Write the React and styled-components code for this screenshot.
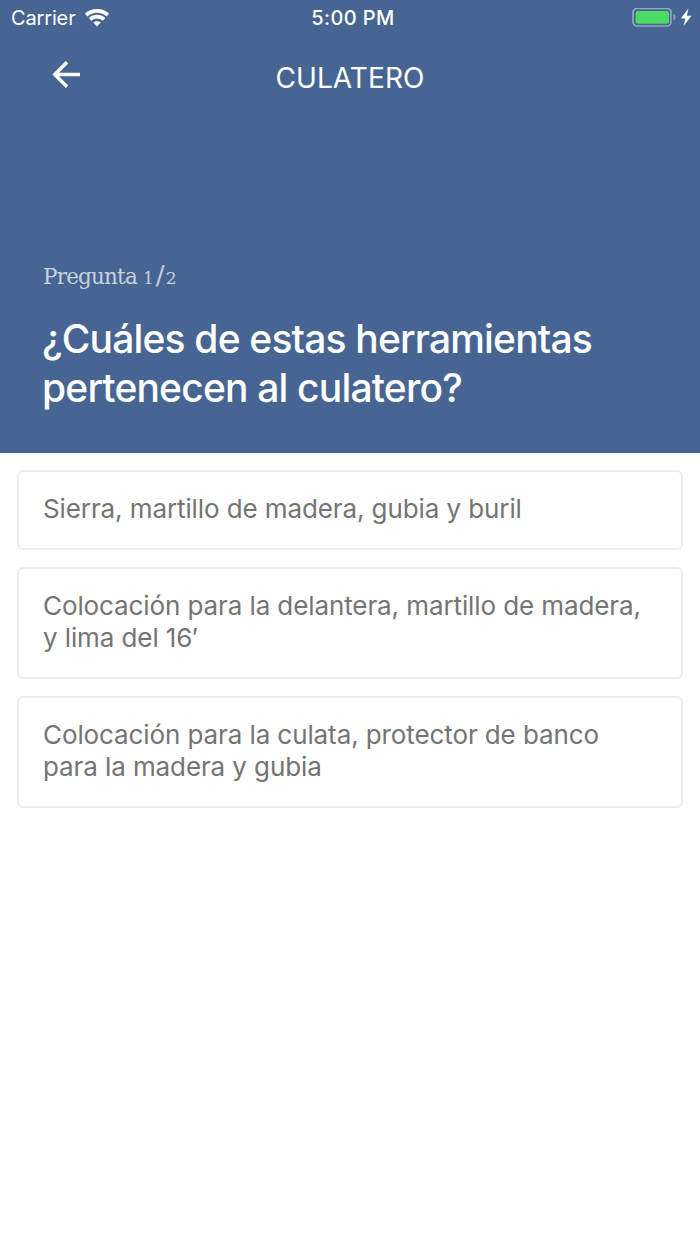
import { useState } from 'react';
import styled, { createGlobalStyle } from 'styled-components';

const GlobalStyle = createGlobalStyle`
* {
  box-sizing: border-box;
}
body {
  margin: 0;
  background: #fff;
  font-family: Inter, 'Liberation Sans', sans-serif;
}
`

const Screen = styled.div`
width: 100%;
min-height: 1244px;
background: #fff;
`

const Header = styled.header`
display: flex;
flex-direction: column;
height: 453px;
background: #476592;
color: #fff;
`

const StatusBar = styled.div`
display: grid;
grid-template-columns: 1fr auto 1fr;
align-items: center;
height: 36px;
padding: 0 8px 0 11px;
`

const Carrier = styled.div`
display: flex;
align-items: center;
gap: 9px;
font-size: 20px;
letter-spacing: -0.15px;
`

const Clock = styled.div`
padding-left: 3px;
font-size: 20px;
font-weight: 500;
letter-spacing: 0.4px;
`

const Battery = styled.div`
display: flex;
justify-content: flex-end;
`

const NavBar = styled.div`
display: grid;
grid-template-columns: 100px 1fr 100px;
align-items: center;
height: 84px;
`

const BackButton = styled.button`
display: flex;
margin: -7px 0 0 50px;
padding: 0;
border: 0;
background: none;
color: #fff;
`

const NavTitle = styled.h1`
margin: 0;
font-size: 28px;
font-weight: 400;
text-align: center;
letter-spacing: 0.1px;
`

const Question = styled.div`
margin-top: auto;
padding: 0 42px 41px;
`

const Step = styled.div`
padding-left: 1px;
font-family: 'DejaVu Serif', 'Liberation Serif', serif;
font-size: 21.5px;
line-height: 28px;
letter-spacing: -0.8px;
color: #c8d1de;
`

const Digit = styled.span`
font-size: 17px;
letter-spacing: 1px;
`

const Slash = styled.span`
padding: 0 2px 0 1px;
font-size: 26px;
line-height: 20px;
`

const QuestionText = styled.h2`
margin: 23px 0 0;
font-size: 39px;
line-height: 48.5px;
font-weight: 500;
letter-spacing: -0.82px;
`

const Answers = styled.div`
display: flex;
flex-direction: column;
gap: 17px;
padding: 17px;
`

const Answer = styled.button`
width: 100%;
padding: 21px 24px 23px;
border: 2px solid #ededed;
border-radius: 6px;
background: #fff;
color: #747474;
font-family: inherit;
font-size: 26px;
line-height: 32px;
letter-spacing: -0.1px;
text-align: left;
`

const answers = [
  'Sierra, martillo de madera, gubia y buril',
  'Colocación para la delantera, martillo de madera, y lima del 16′',
  'Colocación para la culata, protector de banco para la madera y gubia',
]

function App() {
  const [selected, setSelected] = useState(null);

  return (
    <Screen>
      <GlobalStyle />
      <Header>
        <StatusBar>
          <Carrier>
            Carrier
            <svg width="24" height="18" viewBox="0 0 24 18" fill="none" stroke="#fff" strokeWidth="3.7">
              <path d="M1.2 6C7.5.4 16.5.4 22.8 6" />
              <path d="M5 10.4c4.1-3.7 9.9-3.7 14 0" />
              <path d="M12 17.4l-3.7-3.8c2-1.9 5.4-1.9 7.4 0z" fill="#fff" stroke="none" />
            </svg>
          </Carrier>
          <Clock>5:00 PM</Clock>
          <Battery>
            <svg width="60" height="20" viewBox="0 0 60 20">
              <rect x="1" y="0.5" width="38" height="17.5" rx="4" fill="none" stroke="#94a6c2" strokeWidth="1.7" />
              <rect x="3.6" y="3" width="33.4" height="12.7" rx="2" fill="#4cd964" />
              <path d="M41.5 6.2c2.8 1.1 2.8 5 0 6.2z" fill="#94a6c2" />
              <path d="M56.5 0.5L48.8 10.5h4.6L51.5 18 59.6 7.8h-4.8z" fill="#fff" />
            </svg>
          </Battery>
        </StatusBar>
        <NavBar>
          <BackButton aria-label="Volver">
            <svg width="32" height="32" viewBox="0 0 32 32" fill="none" stroke="#fff" strokeWidth="3.4">
              <path d="M30 15.5H5M17 3.3L4.8 15.5 17 27.7" />
            </svg>
          </BackButton>
          <NavTitle>CULATERO</NavTitle>
        </NavBar>
        <Question>
          <Step>
            Pregunta <Digit>1</Digit><Slash>/</Slash><Digit>2</Digit>
          </Step>
          <QuestionText>¿Cuáles de estas herramientas pertenecen al culatero?</QuestionText>
        </Question>
      </Header>
      <Answers>
        {answers.map((a, i) => {
          return <Answer key={i} aria-pressed={selected === i} onClick={() => setSelected(i)}>{a}</Answer>
        })}
      </Answers>
    </Screen>
  );
}

export default App;
